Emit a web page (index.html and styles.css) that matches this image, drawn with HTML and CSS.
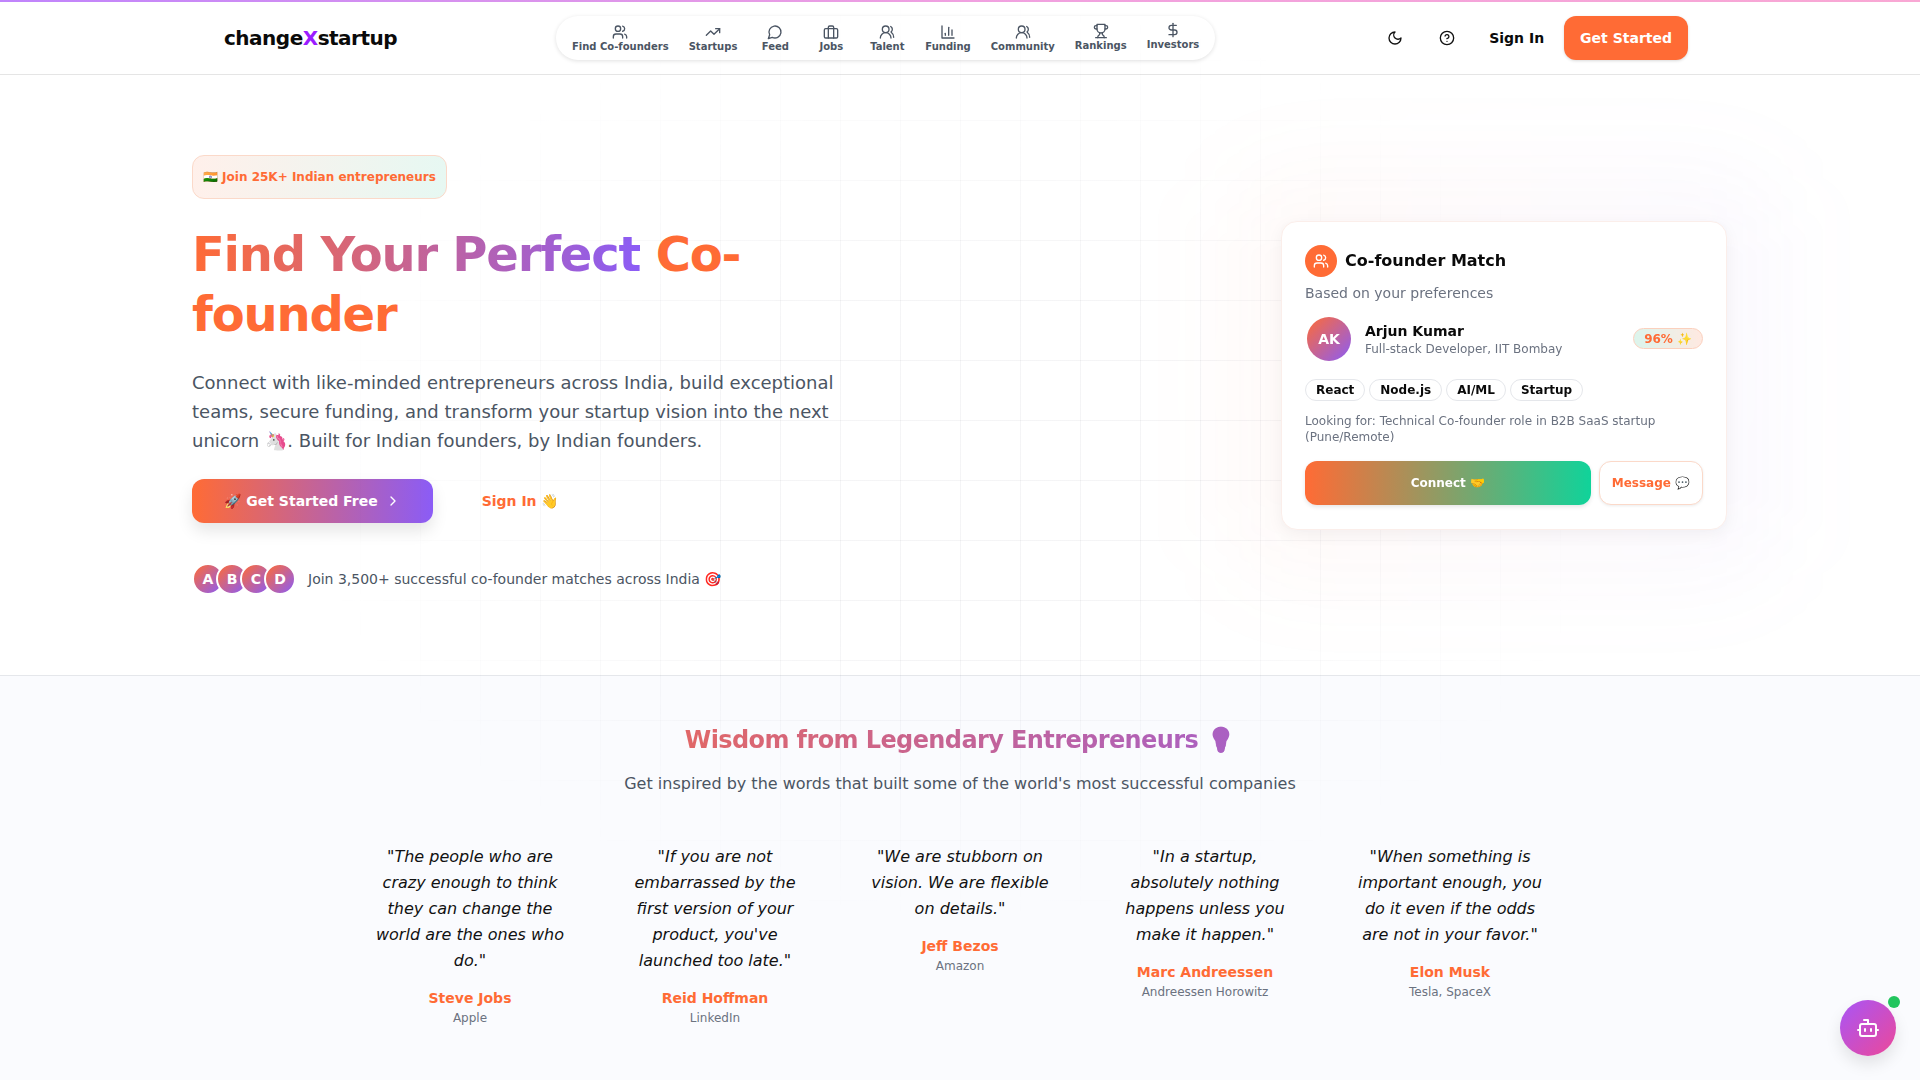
FILE: index.html

```html
<!DOCTYPE html>
<html lang="en">
<head>
  <meta charset="UTF-8">
  <title>changeXstartup</title>
  <link rel="stylesheet" href="styles.css">
</head>
<body>
  <svg class="icon-defs" xmlns="http://www.w3.org/2000/svg">
    <symbol id="i-users" viewBox="0 0 24 24"><path d="M16 21v-2a4 4 0 0 0-4-4H6a4 4 0 0 0-4 4v2"/><circle cx="9" cy="7" r="4"/><path d="M22 21v-2a4 4 0 0 0-3-3.87"/><path d="M16 3.13a4 4 0 0 1 0 7.75"/></symbol>
    <symbol id="i-users-round" viewBox="0 0 24 24"><path d="M18 21a8 8 0 0 0-16 0"/><circle cx="10" cy="8" r="5"/><path d="M22 20c0-3.37-2-6.5-4-8a5 5 0 0 0-.45-8.3"/></symbol>
    <symbol id="i-trend" viewBox="0 0 24 24"><polyline points="22 7 13.5 15.5 8.5 10.5 2 17"/><polyline points="16 7 22 7 22 13"/></symbol>
    <symbol id="i-message" viewBox="0 0 24 24"><path d="M7.9 20A9 9 0 1 0 4 16.1L2 22Z"/></symbol>
    <symbol id="i-briefcase" viewBox="0 0 24 24"><rect x="2" y="7" width="20" height="14" rx="2"/><path d="M16 21V5a2 2 0 0 0-2-2h-4a2 2 0 0 0-2 2v16"/></symbol>
    <symbol id="i-chart" viewBox="0 0 24 24"><path d="M3 3v18h18"/><path d="M18 17V9"/><path d="M13 17V5"/><path d="M8 17v-3"/></symbol>
    <symbol id="i-trophy" viewBox="0 0 24 24"><path d="M6 9H4.5a2.5 2.5 0 0 1 0-5H6"/><path d="M18 9h1.5a2.5 2.5 0 0 0 0-5H18"/><path d="M4 22h16"/><path d="M10 14.66V17c0 .55-.47.98-.97 1.21C7.85 18.75 7 20.24 7 22"/><path d="M14 14.66V17c0 .55.47.98.97 1.21C16.15 18.75 17 20.24 17 22"/><path d="M18 2H6v7a6 6 0 0 0 12 0V2Z"/></symbol>
    <symbol id="i-dollar" viewBox="0 0 24 24"><line x1="12" y1="2" x2="12" y2="22"/><path d="M17 5H9.5a3.5 3.5 0 0 0 0 7h5a3.5 3.5 0 0 1 0 7H6"/></symbol>
    <symbol id="i-moon" viewBox="0 0 24 24"><path d="M12 3a6 6 0 0 0 9 9 9 9 0 1 1-9-9Z"/></symbol>
    <symbol id="i-help" viewBox="0 0 24 24"><circle cx="12" cy="12" r="10"/><path d="M9.09 9a3 3 0 0 1 5.83 1c0 2-3 3-3 3"/><path d="M12 17h.01"/></symbol>
    <symbol id="i-chevron" viewBox="0 0 24 24"><path d="m9 18 6-6-6-6"/></symbol>
    <symbol id="i-bot" viewBox="0 0 24 24"><path d="M12 8V4H8"/><rect x="4" y="8" width="16" height="12" rx="2"/><path d="M2 14h2"/><path d="M20 14h2"/><path d="M15 13v2"/><path d="M9 13v2"/></symbol>
  </svg>

  <div class="top-bar"></div>
  <div class="grid-lines"></div>

  <header class="site-header">
    <div class="logo">change<span class="logo-x">X</span>startup</div>

    <nav class="main-nav">
      <a class="nav-item"><svg class="icon"><use href="#i-users"/></svg>Find Co-founders</a>
      <a class="nav-item"><svg class="icon"><use href="#i-trend"/></svg>Startups</a>
      <a class="nav-item"><svg class="icon"><use href="#i-message"/></svg>Feed</a>
      <a class="nav-item"><svg class="icon"><use href="#i-briefcase"/></svg>Jobs</a>
      <a class="nav-item"><svg class="icon"><use href="#i-users-round"/></svg>Talent</a>
      <a class="nav-item"><svg class="icon"><use href="#i-chart"/></svg>Funding</a>
      <a class="nav-item"><svg class="icon"><use href="#i-users-round"/></svg>Community</a>
      <a class="nav-item nav-rankings"><svg class="icon"><use href="#i-trophy"/></svg>Rankings</a>
      <a class="nav-item nav-investors"><svg class="icon"><use href="#i-dollar"/></svg>Investors</a>
    </nav>

    <div class="header-actions">
      <button class="icon-btn"><svg class="icon"><use href="#i-moon"/></svg></button>
      <button class="icon-btn"><svg class="icon"><use href="#i-help"/></svg></button>
      <a class="signin-link">Sign In</a>
      <a class="btn-orange">Get Started</a>
    </div>
  </header>

  <section class="hero">
    <div class="hero-left">
      <div class="hero-badge">🇮🇳 Join 25K+ Indian entrepreneurs</div>
      <h1 class="hero-title"><span class="title-gradient">Find Your Perfect</span> Co-founder</h1>
      <p class="hero-text">Connect with like-minded entrepreneurs across India, build exceptional teams, secure funding, and transform your startup vision into the next unicorn 🦄. Built for Indian founders, by Indian founders.</p>
      <div class="hero-buttons">
        <a class="btn-primary">🚀 Get Started Free <svg class="icon chevron"><use href="#i-chevron"/></svg></a>
        <a class="btn-ghost">Sign In 👋</a>
      </div>
      <div class="social-proof">
        <div class="avatar-stack">
          <span class="mini-avatar">A</span>
          <span class="mini-avatar">B</span>
          <span class="mini-avatar">C</span>
          <span class="mini-avatar">D</span>
        </div>
        <span>Join 3,500+ successful co-founder matches across India 🎯</span>
      </div>
    </div>

    <div class="match-wrap">
      <div class="match-glow"></div>
      <div class="match-card">
        <div class="match-head">
          <span class="match-icon"><svg class="icon"><use href="#i-users"/></svg></span>
          <span class="match-title">Co-founder Match</span>
        </div>
        <div class="match-sub">Based on your preferences</div>
        <div class="person-row">
          <span class="person-avatar">AK</span>
          <div class="person-info">
            <div class="person-name">Arjun Kumar</div>
            <div class="person-role">Full-stack Developer, IIT Bombay</div>
          </div>
          <span class="score">96% ✨</span>
        </div>
        <div class="tags">
          <span class="tag">React</span>
          <span class="tag">Node.js</span>
          <span class="tag">AI/ML</span>
          <span class="tag">Startup</span>
        </div>
        <p class="looking">Looking for: Technical Co-founder role in B2B SaaS startup (Pune/Remote)</p>
        <div class="match-actions">
          <a class="btn-connect">Connect 🤝</a>
          <a class="btn-message">Message 💬</a>
        </div>
      </div>
    </div>
  </section>

  <section class="wisdom">
    <h2 class="wisdom-title">Wisdom from Legendary Entrepreneurs 💡</h2>
    <p class="wisdom-sub">Get inspired by the words that built some of the world's most successful companies</p>
    <div class="quotes">
      <div class="quote">
        <p class="quote-text">"The people who are crazy enough to think they can change the world are the ones who do."</p>
        <div class="quote-name">Steve Jobs</div>
        <div class="quote-org">Apple</div>
      </div>
      <div class="quote">
        <p class="quote-text">"If you are not embarrassed by the first version of your product, you've launched too late."</p>
        <div class="quote-name">Reid Hoffman</div>
        <div class="quote-org">LinkedIn</div>
      </div>
      <div class="quote">
        <p class="quote-text">"We are stubborn on vision. We are flexible on details."</p>
        <div class="quote-name">Jeff Bezos</div>
        <div class="quote-org">Amazon</div>
      </div>
      <div class="quote">
        <p class="quote-text">"In a startup, absolutely nothing happens unless you make it happen."</p>
        <div class="quote-name">Marc Andreessen</div>
        <div class="quote-org">Andreessen Horowitz</div>
      </div>
      <div class="quote">
        <p class="quote-text">"When something is important enough, you do it even if the odds are not in your favor."</p>
        <div class="quote-name">Elon Musk</div>
        <div class="quote-org">Tesla, SpaceX</div>
      </div>
    </div>
  </section>

  <button class="bot-fab">
    <svg class="icon"><use href="#i-bot"/></svg>
    <span class="bot-dot"></span>
  </button>
</body>
</html>
```

FILE: styles.css

```css
* { box-sizing: border-box; }
html, body { margin: 0; height: 1080px; overflow: hidden; }
body {
  font-family: "DejaVu Sans", "Noto Color Emoji", sans-serif;
  background-color: #fff;
  color: #0a0a0a;
}
a { display: inline-flex; text-decoration: none; }
p { margin: 0; }
.icon-defs { display: none; }
.icon {
  width: 16px;
  height: 16px;
  fill: none;
  stroke: currentColor;
  stroke-width: 2;
  stroke-linecap: round;
  stroke-linejoin: round;
}

.top-bar {
  position: fixed;
  top: 0; left: 0; right: 0;
  height: 2px;
  background: linear-gradient(90deg, #c084fc, #f0a0e0, #f9a8d4);
  z-index: 5;
}
.grid-lines {
  position: fixed;
  inset: 0;
  z-index: 3;
  pointer-events: none;
  background-image:
    linear-gradient(rgba(120,120,140,0.08) 1px, transparent 1px),
    linear-gradient(90deg, rgba(120,120,140,0.08) 1px, transparent 1px);
  background-size: 60px 60px;
  -webkit-mask-image: radial-gradient(ellipse 660px 460px at 960px 460px, #000 40%, transparent 100%);
  mask-image: radial-gradient(ellipse 660px 460px at 960px 460px, #000 40%, transparent 100%);
}

/* header */
.site-header {
  height: 75px;
  padding: 2px 232px 0 224px;
  display: flex;
  align-items: center;
  justify-content: space-between;
  border-bottom: 1px solid #e5e5e5;
  background-color: #fff;
}
.logo { font-size: 20px; font-weight: 700; letter-spacing: -0.025em; }
.logo-x { color: #9b1cff; }
.main-nav {
  height: 44px;
  margin-left: -1px;
  padding: 0 16px;
  display: flex;
  align-items: center;
  gap: 20px;
  border-radius: 22px;
  background-color: #fff;
  box-shadow: 0 1px 4px rgba(0,0,0,0.12);
}
.nav-item {
  min-width: 36px;
  flex-direction: column;
  align-items: center;
  gap: 1px;
  font-size: 10px;
  font-weight: 700;
  color: #4b5563;
}
.nav-rankings { margin-top: -2px; }
.nav-investors { margin-top: -5px; }
.header-actions { display: flex; align-items: center; }
.icon-btn {
  width: 40px;
  height: 40px;
  margin-right: 12px;
  padding: 0;
  border: 0;
  background: none;
  color: #111;
  display: flex;
  align-items: center;
  justify-content: center;
}
.signin-link { margin: 0 20px 0 10px; font-size: 14px; font-weight: 700; }
.btn-orange {
  height: 44px;
  padding: 0 16px;
  align-items: center;
  border-radius: 12px;
  background-color: #ff6b35;
  color: #fff;
  font-size: 14px;
  font-weight: 700;
  box-shadow: 0 1px 3px rgba(0,0,0,0.15);
}

/* hero */
.hero {
  height: 600px;
  padding: 0 193px 0 192px;
  display: flex;
  align-items: center;
  justify-content: space-between;
}
.hero-left { width: 672px; }
.hero-badge {
  display: inline-flex;
  align-items: center;
  height: 44px;
  padding: 0 10px;
  border: 1px solid #fbd9c9;
  border-radius: 12px;
  background: linear-gradient(90deg, rgba(255,107,53,0.1), rgba(16,185,129,0.1));
  color: #ff6b35;
  font-size: 12px;
  font-weight: 700;
}
.hero-title {
  margin: 25px 0 24px;
  font-size: 48px;
  line-height: 60px;
  font-weight: 700;
  letter-spacing: -0.025em;
  color: #ff6b35;
}
.title-gradient {
  background: linear-gradient(90deg, #ff6b35, #8b5cf6);
  -webkit-background-clip: text;
  background-clip: text;
  color: transparent;
}
.hero-text { font-size: 18px; line-height: 29.25px; color: #4b5563; }
.hero-buttons { display: flex; align-items: center; gap: 17px; margin-top: 24px; }
.btn-primary {
  height: 44px;
  padding: 0 32px;
  align-items: center;
  gap: 4px;
  border-radius: 12px;
  background: linear-gradient(90deg, #ff6b35, #8b5cf6);
  color: #fff;
  font-size: 14px;
  font-weight: 700;
  box-shadow: 0 8px 16px rgba(0,0,0,0.1);
}
.chevron { margin-left: 3px; }
.btn-ghost {
  height: 44px;
  padding: 0 32px;
  align-items: center;
  color: #ff6b35;
  font-size: 14px;
  font-weight: 700;
}
.social-proof {
  display: flex;
  align-items: center;
  gap: 12px;
  margin-top: 40px;
  font-size: 14px;
  color: #4b5563;
}
.avatar-stack { display: flex; margin-right: 8px; }
.mini-avatar {
  width: 32px;
  height: 32px;
  margin-right: -8px;
  border: 2px solid #fff;
  border-radius: 50%;
  background: linear-gradient(135deg, #ff6b35, #8b5cf6);
  color: #fff;
  font-size: 14px;
  font-weight: 700;
  display: flex;
  align-items: center;
  justify-content: center;
}

/* match card */
.match-wrap { position: relative; z-index: 4; width: 446px; }
.match-glow {
  position: absolute;
  inset: -48px;
  border-radius: 48px;
  background: linear-gradient(90deg, rgba(255,107,53,0.04), rgba(139,92,246,0.04));
  filter: blur(48px);
}
.match-card {
  position: relative;
  padding: 23px 23px 24px;
  border: 1px solid #fbeeea;
  border-radius: 16px;
  background-color: #fff;
  box-shadow: 0 4px 16px rgba(0,0,0,0.05);
}
.match-head { display: flex; align-items: center; gap: 8px; }
.match-icon {
  width: 32px;
  height: 32px;
  border-radius: 50%;
  background-color: #ff6b35;
  color: #fff;
  display: flex;
  align-items: center;
  justify-content: center;
}
.match-title { font-size: 16px; font-weight: 700; }
.match-sub { margin-top: 6px; font-size: 14px; line-height: 20px; color: #6b7280; }
.person-row { display: flex; align-items: center; margin-top: 14px; padding-left: 2px; }
.person-avatar {
  width: 44px;
  height: 44px;
  border-radius: 50%;
  background: linear-gradient(135deg, #ff6b35, #8b5cf6);
  color: #fff;
  font-size: 14px;
  font-weight: 700;
  display: flex;
  align-items: center;
  justify-content: center;
}
.person-info { flex: 1; margin-left: 14px; padding-top: 2px; }
.person-name { font-size: 14px; line-height: 19px; font-weight: 700; }
.person-role { font-size: 12px; line-height: 16px; color: #6b7280; }
.score {
  height: 21px;
  padding: 0 10px;
  display: flex;
  align-items: center;
  border: 1px solid #fbd0bd;
  border-radius: 11px;
  background: linear-gradient(90deg, rgba(16,185,129,0.15), rgba(255,107,53,0.15));
  color: #ff6b35;
  font-size: 12px;
  font-weight: 700;
}
.tags { display: flex; gap: 4px; margin-top: 18px; }
.tag {
  height: 22px;
  padding: 0 10px;
  display: flex;
  align-items: center;
  border: 1px solid #e5e7eb;
  border-radius: 11px;
  font-size: 12px;
  font-weight: 700;
}
.looking { margin-top: 12px; font-size: 12px; line-height: 16px; color: #6b7280; }
.match-actions { display: flex; gap: 8px; margin-top: 16px; }
.btn-connect {
  flex: 1;
  height: 44px;
  align-items: center;
  justify-content: center;
  border-radius: 12px;
  background: linear-gradient(90deg, #ff6b35, #10d39a);
  color: #fff;
  font-size: 12px;
  font-weight: 700;
  box-shadow: 0 2px 4px rgba(0,0,0,0.1);
}
.btn-message {
  height: 44px;
  padding: 0 12px;
  align-items: center;
  border: 1px solid #fbd9c9;
  border-radius: 12px;
  background-color: #fff;
  color: #ff6b35;
  font-size: 12px;
  font-weight: 700;
  box-shadow: 0 1px 3px rgba(0,0,0,0.08);
}

/* quotes */
.wisdom {
  height: 405px;
  padding-top: 48px;
  border-top: 1px solid #e5e7eb;
  background-color: #fafbfe;
  text-align: center;
}
.wisdom-title {
  width: 1152px;
  margin: 0 auto;
  font-size: 24px;
  line-height: 32px;
  font-weight: 700;
  letter-spacing: -0.025em;
  background: linear-gradient(90deg, #ff6b35, #8b5cf6);
  -webkit-background-clip: text;
  background-clip: text;
  color: transparent;
}
.wisdom-sub { margin-top: 16px; font-size: 16px; line-height: 24px; color: #4b5563; }
.quotes {
  margin-top: 48px;
  display: grid;
  grid-template-columns: repeat(5, 197px);
  justify-content: center;
  gap: 48px;
}
.quote-text { padding: 0 3px; font-size: 16px; line-height: 26px; font-style: italic; color: #111; }
.quote-name { margin-top: 14px; font-size: 14px; line-height: 20px; font-weight: 700; color: #ff6b35; }
.quote-org { margin-top: 1px; font-size: 12px; line-height: 18px; color: #6b7280; }

.bot-fab {
  position: fixed;
  right: 24px;
  bottom: 24px;
  width: 56px;
  height: 56px;
  padding: 0;
  border: 0;
  border-radius: 50%;
  background: linear-gradient(135deg, #a855f7, #ec4899);
  color: #fff;
  display: flex;
  align-items: center;
  justify-content: center;
  box-shadow: 0 8px 16px rgba(0,0,0,0.1);
  z-index: 6;
}
.bot-fab .icon { width: 24px; height: 24px; }
.bot-dot {
  position: absolute;
  top: -4px;
  right: -4px;
  width: 12px;
  height: 12px;
  border-radius: 50%;
  background-color: #22c55e;
}
```
